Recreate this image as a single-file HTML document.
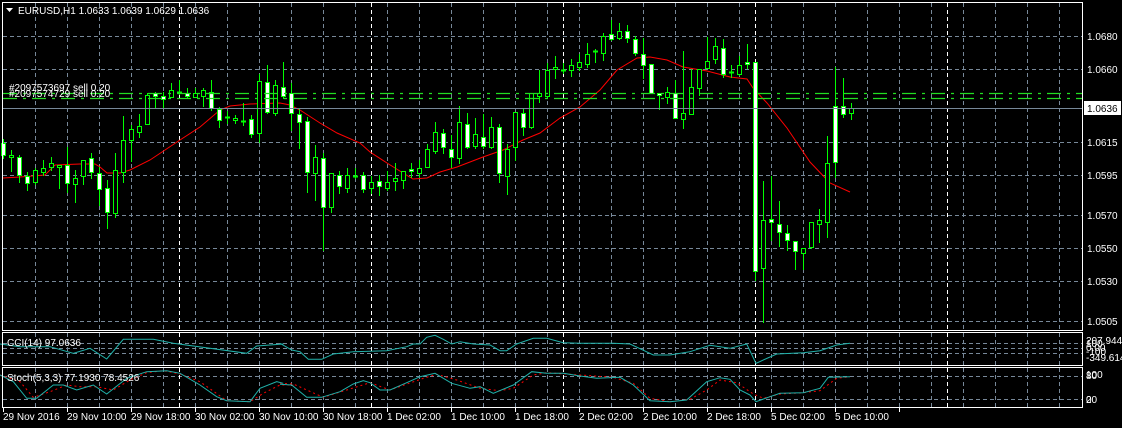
<!DOCTYPE html>
<html><head><meta charset="utf-8"><style>
html,body{margin:0;padding:0;background:#000;width:1122px;height:428px;overflow:hidden}
svg{display:block}
text{font-family:"Liberation Sans",sans-serif;font-size:10px;fill:#fff}
</style></head><body>
<svg id="s" width="1122" height="428" viewBox="0 0 1122 428" xmlns="http://www.w3.org/2000/svg">
<rect width="1122" height="428" fill="#000"/>
<g id="grid"></g>
<g id="ma"></g>
<g id="cd"></g>
<g id="ind"></g>
<g fill="none" stroke="#fff" stroke-width="1">
<rect x="2.5" y="2.5" width="1080" height="328"/>
<rect x="2.5" y="332.5" width="1080" height="33"/>
<rect x="2.5" y="367.5" width="1080" height="40"/>
</g>
<line x1="3" y1="108.5" x2="1082" y2="108.5" stroke="#778899"/>
<g stroke="#22dd22" stroke-dasharray="14,6,3,6" stroke-width="1.2">
<line x1="3" y1="93.5" x2="1082" y2="93.5"/>
<line x1="3" y1="98.5" x2="1082" y2="98.5"/>
</g>
<text x="9" y="91">#2097573697 sell 0.20</text>
<text x="9" y="97">#2097574729 sell 0.20</text>
<path d="M6 8 L13 8 L9.5 12 Z" fill="#fff"/>
<text x="18" y="14">EURUSD,H1  1.0633 1.0639 1.0629 1.0636</text>
<g>
<text x="1087" y="40">1.0680</text>
<text x="1087" y="73">1.0660</text>
<rect x="1084" y="101" width="37" height="14" fill="#fff"/>
<text x="1087" y="112" style="fill:#000">1.0636</text>
<text x="1087" y="146">1.0615</text>
<text x="1087" y="179">1.0595</text>
<text x="1087" y="219">1.0570</text>
<text x="1087" y="252">1.0550</text>
<text x="1087" y="285">1.0530</text>
<text x="1087" y="325">1.0505</text>
<text x="1086" y="344">207.9446</text>
<text x="1086" y="347">100</text>
<text x="1086" y="351">0.00</text>
<text x="1086" y="355">-100</text>
<text x="1086" y="361">-349.614</text>
<text x="1086" y="378">100</text>
<text x="1086" y="379">80</text>
<text x="1086" y="403">20</text>
<text x="1086" y="403">0</text>
</g>
<text x="7" y="346">CCI(14) 97.0636</text>
<text x="7" y="381">Stoch(5,3,3) 77.1930 78.4526</text>
<g id="ticks"></g>
<g>
<text x="3" y="420">29 Nov 2016</text>
<text x="67" y="420">29 Nov 10:00</text>
<text x="131" y="420">29 Nov 18:00</text>
<text x="195" y="420">30 Nov 02:00</text>
<text x="259" y="420">30 Nov 10:00</text>
<text x="323" y="420">30 Nov 18:00</text>
<text x="387" y="420">1 Dec 02:00</text>
<text x="451" y="420">1 Dec 10:00</text>
<text x="515" y="420">1 Dec 18:00</text>
<text x="579" y="420">2 Dec 02:00</text>
<text x="643" y="420">2 Dec 10:00</text>
<text x="707" y="420">2 Dec 18:00</text>
<text x="771" y="420">5 Dec 02:00</text>
<text x="835" y="420">5 Dec 10:00</text>
</g>
</svg>
<script>
var NS="http://www.w3.org/2000/svg";
function el(p,t,a){var e=document.createElementNS(NS,t);for(var k in a)e.setAttribute(k,a[k]);document.getElementById(p).appendChild(e);return e;}
var gy=[36,69,108,142,175,215,248,281,321];
gy.forEach(function(y){el("grid","line",{x1:3,x2:1082,y1:y+.5,y2:y+.5,stroke:"#778899","stroke-dasharray":"4,3"});});
[343,348,353].forEach(function(y){el("grid","line",{x1:3,x2:1082,y1:y+.5,y2:y+.5,stroke:"#778899","stroke-dasharray":"4,3"});});
[376,399].forEach(function(y){el("grid","line",{x1:3,x2:1082,y1:y+.5,y2:y+.5,stroke:"#778899","stroke-dasharray":"4,3"});});
for(var x=35;x<1082;x+=32){
 [[3,330],[333,365],[368,407]].forEach(function(r){el("grid","line",{x1:x+.5,x2:x+.5,y1:r[0],y2:r[1],stroke:"#778899","stroke-dasharray":"4,3"});});
}
for(var x=179;x<1082;x+=192){
 [[3,330],[333,365],[368,407]].forEach(function(r){el("grid","line",{x1:x+.5,x2:x+.5,y1:r[0],y2:r[1],stroke:"#fff","stroke-dasharray":"4,3"});});
}
for(var x=3;x<900;x+=64){el("ticks","line",{x1:x+.5,x2:x+.5,y1:408,y2:412,stroke:"#fff"});}
var C=[[139,158,143,155,1],[150,171,155,157,0],[155,182,157,175,1],[172,190,176,183,1],[168,184,170,182,0],[160,175,168,172,0],[157,170,163,167,0],[165,188,165,167,0],[147,192,165,183,1],[170,202,178,184,0],[160,184,160,176,0],[153,178,158,172,1],[167,205,173,189,1],[180,228,188,212,1],[153,217,170,213,0],[116,182,140,172,0],[125,161,129,140,0],[114,137,126,132,0],[93,124,95,124,0],[92,107,93,96,1],[92,107,96,99,1],[83,97,90,97,0],[80,94,92,93,0],[88,97,93,96,1],[88,97,93,97,0],[88,106,90,96,0],[80,110,92,108,1],[107,127,109,120,1],[111,123,117,118,0],[115,123,118,120,0],[103,125,121,122,0],[115,137,119,134,1],[74,142,81,133,0],[65,113,82,112,1],[80,115,85,113,0],
[62,98,87,96,1],[83,130,93,113,1],[108,148,114,122,1],[117,192,121,172,1],[145,200,157,173,0],[153,250,158,207,1],[173,212,173,207,0],[171,193,175,186,1],[168,192,175,188,0],[168,178,176,177,0],[172,192,175,189,1],[176,193,182,188,0],[175,195,181,186,1],[171,190,182,188,0],[163,190,178,181,0],[171,188,171,180,0],[163,177,169,171,1],[160,177,168,173,0],[144,167,149,167,0],[122,153,132,151,0],[129,153,133,147,1],[135,167,149,157,1],[106,163,122,158,0],[113,148,124,147,1],[118,148,134,146,0],[114,148,137,146,1],[117,148,127,147,0],[124,182,127,173,1],[144,194,149,176,0],[112,160,112,147,0],[109,135,113,127,1],[93,128,93,127,0],[70,102,93,96,0],[63,97,70,96,0],
[56,78,67,69,0],[63,73,70,71,0],[59,76,65,70,0],[54,70,62,67,0],[43,67,54,64,0],[49,62,51,52,0],[33,60,36,53,0],[20,40,34,39,1],[23,39,31,38,0],[25,42,31,38,1],[36,55,39,53,1],[38,78,54,65,1],[64,93,64,93,1],[93,109,93,95,1],[87,103,92,97,0],[80,118,93,118,1],[51,128,113,119,0],[69,114,87,114,0],[69,95,69,88,0],[37,68,61,68,0],[38,63,46,59,0],[39,77,48,74,1],[65,77,72,73,0],[56,75,65,74,0],[44,68,62,64,1],[62,280,62,271,1],
[181,322,220,268,0],[176,240,219,222,1],[201,246,224,232,1],[225,250,233,240,1],[241,269,241,251,1],[248,269,248,253,0],[222,248,222,247,0],[209,242,220,224,0],[136,237,163,222,0],[67,177,106,162,1],[78,117,106,114,1],[103,119,108,113,0]];
var G="#00ff00";
C.forEach(function(c,i){
 var cx=3+8*i;
 el("cd","line",{x1:cx+.5,x2:cx+.5,y1:c[0],y2:c[1]+1,stroke:G});
 var h=c[3]-c[2];
 if(h<2){el("cd","line",{x1:cx-2,x2:cx+3,y1:c[2]+.5,y2:c[2]+.5,stroke:G,"stroke-width":2});}
 else el("cd","rect",{x:cx-1.5,y:c[2]+.5,width:4,height:h,fill:c[4]?"#fff":"#000",stroke:G});
});
var M=[[3,178],[20,177],[45,175],[55,165],[80,164],[95,164],[100,167],[107,173],[120,173],[130,170],[150,160],[180,140],[200,127],[220,110],[230,106],[250,104],[280,103],[290,105],[300,110],[320,123],[337,133],[360,143],[370,152],[387,163],[403,173],[413,179],[427,178],[440,172],[457,167],[483,157],[503,150],[523,140],[540,133],[560,118],[580,107],[600,90],[617,70],[637,58],[650,57],[667,60],[683,67],[707,71],[730,77],[747,79],[753,88],[767,103],[787,128],[810,162],[830,183],[850,192]];
el("ma","polyline",{points:M.map(function(p){return p.join(",")}).join(" "),fill:"none",stroke:"#ff0000"});
function pl(pts,ox,oy,col,dash){
 var s=pts.map(function(p){return (ox+p[0]/3).toFixed(1)+","+(oy+p[1]/3).toFixed(1)}).join(" ");
 var a={points:s,fill:"none",stroke:col};if(dash)a["stroke-dasharray"]=dash;el("ind","polyline",a);
}
pl([[0,72],[60,80],[150,80],[220,100],[270,85],[320,117],[370,58],[460,58],[520,70],[740,100],[770,78],[850,72]],0,320,"#20b2aa");
pl([[0,40],[35,60],[60,65],[85,88],[125,88],[160,72],[220,65],[320,62],[380,50],[400,42],[420,42],[440,22],[465,16],[490,28],[515,42],[540,35],[580,42],[630,45],[660,62],[680,62],[710,42],[760,25],[800,25],[850,38],[900,40],[1000,40],[1050,42],[1120,75],[1170,75]],280,330,"#20b2aa");
pl([[0,75],[60,65],[120,46],[180,55],[230,42],[258,100],[320,72],[400,68],[450,62],[500,45],[540,40]],670,330,"#20b2aa");
pl([[0,165],[60,185],[100,232],[150,215],[200,195],[240,200],[290,200],[340,210],[390,180],[440,158],[490,152],[540,162],[600,185],[680,242],[750,245],[790,220],[840,195],[880,195]],0,320,"#ff0000","2,3");
pl([[0,160],[40,162],[130,202],[200,180],[270,158],[330,180],[430,145],[470,133],[530,150],[600,175],[660,182],[700,175],[760,135],[800,128],[900,135],[1000,142],[1060,160],[1110,205],[1170,215]],280,330,"#ff0000","2,3");
pl([[0,215],[60,208],[110,180],[150,150],[200,158],[250,192],[280,205],[330,192],[400,188],[450,182],[500,145],[540,140]],670,330,"#ff0000","2,3");
pl([[0,165],[40,185],[80,235],[110,235],[160,195],[190,195],[230,210],[280,195],[320,222],[380,175],[440,155],[500,152],[540,160],[600,195],[650,230],[680,242],[750,245],[780,205],[830,185],[850,190]],0,320,"#20b2aa");
pl([[0,163],[35,165],[80,202],[125,202],[180,185],[220,162],[250,152],[270,158],[300,180],[330,180],[380,158],[420,140],[465,130],[515,160],[570,175],[600,170],[640,190],[700,165],[755,125],[800,130],[850,130],[900,138],[950,145],[1020,142],[1060,165],[1110,212],[1170,215]],280,330,"#20b2aa");
pl([[0,215],[50,210],[110,155],[150,143],[180,148],[210,180],[240,195],[258,215],[300,200],[330,190],[400,188],[450,175],[475,142],[540,140]],670,330,"#20b2aa");
</script>
</body></html>
